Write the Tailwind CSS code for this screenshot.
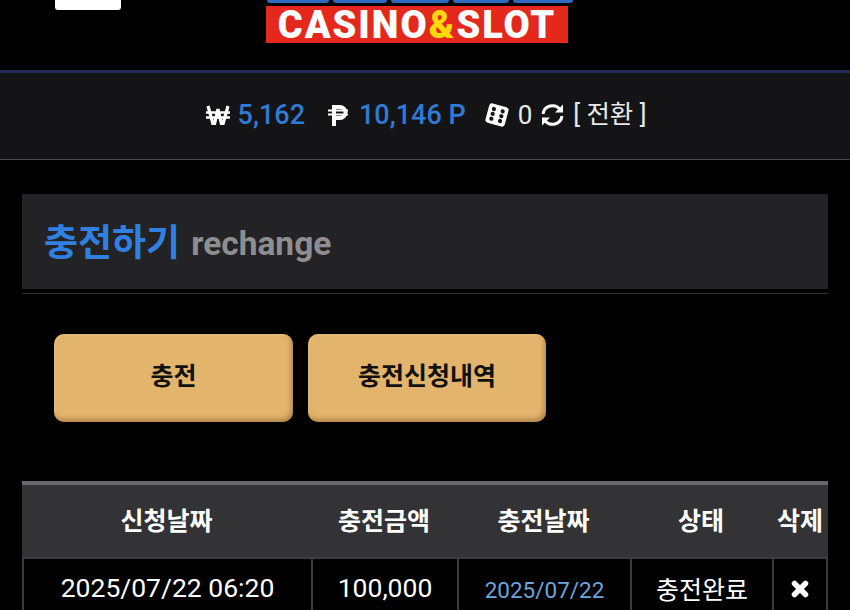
<!DOCTYPE html>
<html lang="ko">
<head>
    <meta charset="UTF-8">
    <meta name="viewport" content="width=device-width, initial-scale=1.0">
    <title>충전하기</title>
    <script src="https://cdn.jsdelivr.net/npm/@tailwindcss/browser@4"></script>
</head>
<body class="bg-black text-white font-['Roboto','Noto_Sans_CJK_KR',sans-serif] h-[610px] overflow-hidden">
    <!-- Header -->
    <header class="relative h-[73px] bg-black border-b-[3px] border-[#232c58]">
        <div class="absolute left-[55px] top-0 w-[66px] h-[10px] bg-white rounded-b-[3px]"></div>
        <!-- Logo -->
        <div class="absolute left-[267px] top-0 w-[310px] h-[3px] flex gap-[4px] overflow-hidden">
            <div class="w-[62px] h-[3px] rounded-b-full bg-[#2f69c0]"></div>
            <div class="w-[54px] h-[3px] rounded-b-full bg-[#2f69c0]"></div>
            <div class="w-[58px] h-[3px] rounded-b-full bg-[#2f69c0]"></div>
            <div class="w-[56px] h-[3px] rounded-b-full bg-[#2f69c0]"></div>
            <div class="w-[60px] h-[3px] rounded-b-full bg-[#2f69c0]"></div>
        </div>
        <div class="absolute left-[266px] top-[6px] w-[302px] h-[37px] bg-[#e5281c] flex items-center justify-center text-[38px] font-black leading-none tracking-[2px] font-['Roboto',sans-serif]">
            <span>CASINO</span><span class="text-[#fcd80c]">&amp;</span><span>SLOT</span>
        </div>
    </header>

    <!-- Balance bar -->
    <div class="h-[87px] bg-[#141416] border-b border-[#4a4a4c] flex items-center justify-center text-[27px] leading-none pb-[2px] pl-[2px]">
        <svg class="w-[24px] h-[20px] mr-[8px]" viewBox="0 0 24 20" fill="none" stroke="#fff">
            <path d="M2 1l5 18h1.500L12 4l3.500 15H17l5-18" stroke-width="3.200"/>
            <path d="M0 7.500h24M0 12.500h24" stroke-width="2.400"/>
        </svg>
        <span class="text-[#2f7bd6] font-medium">5,162</span>
        <svg class="w-[20px] h-[21px] ml-[23px] mr-[11px]" viewBox="0 0 20 21" fill="none" stroke="#fff">
            <path d="M6 21V2h6a5 5 0 0 1 0 11H6" stroke-width="4"/>
            <path d="M0 5.500h20M0 9.500h20" stroke-width="2"/>
        </svg>
        <span class="text-[#2f7bd6] font-medium">10,146 P</span>
        <svg class="w-[24px] h-[24px] ml-[19px] mr-[9px]" viewBox="0 0 24 24">
            <g transform="rotate(15 12 12)">
                <rect x="2" y="2" width="20" height="20" rx="3" fill="#fff"/>
                <circle cx="7.500" cy="7" r="2.100" fill="#141416"/>
                <circle cx="7.500" cy="12" r="2.100" fill="#141416"/>
                <circle cx="7.500" cy="17" r="2.100" fill="#141416"/>
                <circle cx="16.500" cy="7" r="2.100" fill="#141416"/>
                <circle cx="16.500" cy="12" r="2.100" fill="#141416"/>
                <circle cx="16.500" cy="17" r="2.100" fill="#141416"/>
            </g>
        </svg>
        <span class="text-[26px] text-[#e8e8e8]">0</span>
        <svg class="w-[25px] h-[24px] ml-[8px] mr-[8px]" viewBox="0 0 25 24" fill="none" stroke="#fff" stroke-width="3">
            <path d="M3 11A9.500 9.500 0 0 1 20 6.500"/>
            <path d="M22 13A9.500 9.500 0 0 1 5 17.500"/>
            <path d="M23 1.500v8h-8z" fill="#fff" stroke="none"/>
            <path d="M2 22.500v-8h8z" fill="#fff" stroke="none"/>
        </svg>
        <span class="text-[25.500px] text-[#e8e8e8]">[ 전환 ]</span>
    </div>

    <main class="px-[22px]">
        <!-- Title -->
        <div class="mt-[34px] h-[95px] bg-[#232325] flex items-center pl-[22px] pt-[3px]">
            <h1 class="text-[37px] font-bold text-[#2f80e0] leading-none">충전하기</h1>
            <span class="ml-[11px] text-[33.500px] font-bold text-[#8e8e90] leading-none mt-[2px]">rechange</span>
        </div>
        <div class="mt-[4px] h-px bg-[#2f2f31]"></div>

        <!-- Buttons -->
        <div class="mt-[40px] ml-[32px] flex gap-[15px]">
            <a class="w-[239px] h-[88px] rounded-[10px] bg-[#e2b46c] shadow-[inset_-2px_-3px_4px_rgba(120,80,30,0.45),inset_1px_1px_3px_rgba(255,235,190,0.3)] flex items-center justify-center text-[25px] font-bold text-[#111] pb-[2px]">충전</a>
            <a class="w-[238px] h-[88px] rounded-[10px] bg-[#e2b46c] shadow-[inset_-2px_-3px_4px_rgba(120,80,30,0.45),inset_1px_1px_3px_rgba(255,235,190,0.3)] flex items-center justify-center text-[25px] font-bold text-[#111] pb-[2px]">충전신청내역</a>
        </div>

        <!-- History table -->
        <table class="mt-[59px] w-[806px] table-fixed border-separate border-spacing-0 text-center">
            <colgroup>
                <col class="w-[289px]">
                <col class="w-[146px]">
                <col class="w-[173px]">
                <col class="w-[142px]">
                <col class="w-[56px]">
            </colgroup>
            <thead>
                <tr class="text-[25px] text-white">
                    <th class="h-[76px] bg-[#333335] border-t-4 border-[#68686a] font-bold pt-[1px]">신청날짜</th>
                    <th class="h-[76px] bg-[#333335] border-t-4 border-[#68686a] font-bold pt-[1px]">충전금액</th>
                    <th class="h-[76px] bg-[#333335] border-t-4 border-[#68686a] font-bold pt-[1px]">충전날짜</th>
                    <th class="h-[76px] bg-[#333335] border-t-4 border-[#68686a] font-bold pt-[1px]">상태</th>
                    <th class="h-[76px] bg-[#333335] border-t-4 border-[#68686a] font-bold pt-[1px]">삭제</th>
                </tr>
            </thead>
            <tbody>
                <tr class="text-[26.500px]">
                    <td class="h-[60px] border-l-2 border-t-2 border-[#3c3c3e] align-top pt-[9px]">2025/07/22 06:20</td>
                    <td class="h-[60px] border-l-2 border-t-2 border-[#3c3c3e] align-top pt-[9px]">100,000</td>
                    <td class="h-[60px] border-l-2 border-t-2 border-[#3c3c3e] align-top pt-[15px] text-[22.500px] text-[#6da5dc]">2025/07/22</td>
                    <td class="h-[60px] border-l-2 border-t-2 border-[#3c3c3e] align-top pt-[13px] text-[25px]">충전완료</td>
                    <td class="h-[60px] border-l-2 border-t-2 border-r-2 border-[#3c3c3e] align-top pt-[21px]">
                        <svg class="w-[18px] h-[18px] mx-auto" viewBox="0 0 18 18" stroke="#fff" stroke-width="5.500" stroke-linecap="round">
                            <path d="M3.500 3.500l11 11M14.500 3.500l-11 11"/>
                        </svg>
                    </td>
                </tr>
            </tbody>
        </table>
    </main>
</body>
</html>
